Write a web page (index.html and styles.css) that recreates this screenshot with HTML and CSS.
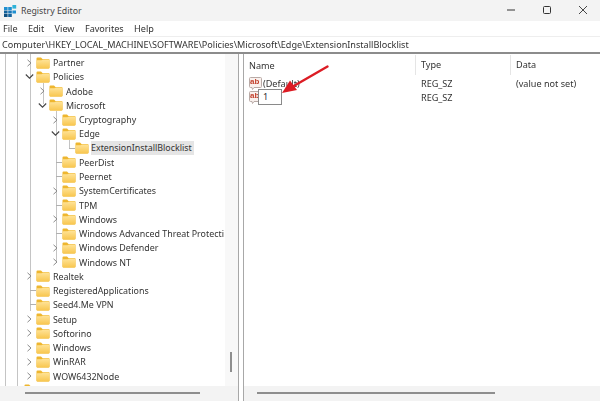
FILE: index.html
```html
<!DOCTYPE html>
<html lang="en">
<head>
<meta charset="utf-8">
<title>Registry Editor</title>
<link rel="stylesheet" href="styles.css">
</head>
<body>
<svg class="defs" width="0" height="0" aria-hidden="true">
  <defs>
    <linearGradient id="fold" x1="0" y1="0" x2="0" y2="1"><stop offset="0" stop-color="#ffe49a"/><stop offset="1" stop-color="#f8c64e"/></linearGradient>
    <symbol id="folder" viewBox="0 0 14 12">
      <path d="M0.5 1.5Q0.5 0.5 1.5 0.5H5L6.5 2H12.5Q13.5 2 13.5 3V10.5Q13.5 11.5 12.5 11.5H1.5Q0.5 11.5 0.5 10.5Z" fill="#eeb62f"/>
      <path d="M0.5 4Q0.5 3.2 1.5 3.2H5.5L7 2.4H12.5Q13.5 2.4 13.5 3.4V10.5Q13.5 11.5 12.5 11.5H1.5Q0.5 11.5 0.5 10.5Z" fill="url(#fold)"/>
    </symbol>
    <symbol id="closed" viewBox="0 0 7 8"><path d="M1.5 0.8L5 4L1.5 7.2" fill="none" stroke="#8a8a8a" stroke-width="1"/></symbol>
    <symbol id="open" viewBox="0 0 9 7"><path d="M0.8 1.5L4.5 5.2L8.2 1.5" fill="none" stroke="#444" stroke-width="1.1"/></symbol>
    <symbol id="ab" viewBox="0 0 13 13">
      <path d="M1.5 0.5H11.5Q12.5 0.5 12.5 1.5V9.5Q12.5 10.5 11.5 10.5H5L3.5 12.5L3 10.5H1.5Q0.5 10.5 0.5 9.5V1.5Q0.5 0.5 1.5 0.5Z" fill="#f9f1ee" stroke="#b9aaa6"/>
    </symbol>
  </defs>
</svg>

<header class="titlebar">
  <svg class="appicon" viewBox="0 0 13 12" width="13" height="12">
    <rect x="0" y="2" width="3.6" height="3" fill="#1f8fd0"/><rect x="4.2" y="2" width="3.6" height="3" fill="#1f8fd0"/><rect x="8.4" y="0" width="3.8" height="3.6" fill="#2fb3d8"/>
    <rect x="0" y="5.5" width="3.6" height="3" fill="#14639c"/><rect x="4.2" y="5.5" width="3.6" height="3" fill="#1976b8"/><rect x="8.4" y="5.5" width="3.6" height="3" fill="#1f8fd0"/>
    <rect x="0" y="9" width="3.6" height="3" fill="#0f4f80"/><rect x="4.2" y="9" width="3.6" height="3" fill="#14639c"/>
  </svg>
  <span class="apptitle">Registry Editor</span>
  <div class="winbtns">
    <svg viewBox="0 0 10 10" width="10" height="10"><path d="M1 5H9" stroke="#333" stroke-width="1"/></svg>
    <svg viewBox="0 0 10 10" width="10" height="10"><rect x="1.5" y="1.5" width="7" height="7" rx="1" fill="none" stroke="#333" stroke-width="1"/></svg>
    <svg viewBox="0 0 10 10" width="10" height="10"><path d="M1 1L9 9M9 1L1 9" stroke="#333" stroke-width="0.9"/></svg>
  </div>
</header>

<nav class="menubar"><span>File</span><span>Edit</span><span>View</span><span>Favorites</span><span>Help</span></nav>
<div class="address">Computer\HKEY_LOCAL_MACHINE\SOFTWARE\Policies\Microsoft\Edge\ExtensionInstallBlocklist</div>

<main class="panes">
  <section class="treepane">
    <div class="treeview">
      <div class="tree">
        <div class="row l1"><svg class="tw"><use href="#closed"/></svg><svg class="fd"><use href="#folder"/></svg><span>Partner</span></div>
        <div class="row l1"><svg class="to"><use href="#open"/></svg><svg class="fd"><use href="#folder"/></svg><span>Policies</span></div>
        <div class="row l2"><svg class="tw"><use href="#closed"/></svg><svg class="fd"><use href="#folder"/></svg><span>Adobe</span></div>
        <div class="row l2"><svg class="to"><use href="#open"/></svg><svg class="fd"><use href="#folder"/></svg><span>Microsoft</span></div>
        <div class="row l3"><svg class="tw"><use href="#closed"/></svg><svg class="fd"><use href="#folder"/></svg><span>Cryptography</span></div>
        <div class="row l3"><svg class="to"><use href="#open"/></svg><svg class="fd"><use href="#folder"/></svg><span>Edge</span></div>
        <div class="row l4"><i class="tn"></i><svg class="fd"><use href="#folder"/></svg><span class="sel">ExtensionInstallBlocklist</span></div>
        <div class="row l3"><i class="tn"></i><svg class="fd"><use href="#folder"/></svg><span>PeerDist</span></div>
        <div class="row l3"><i class="tn"></i><svg class="fd"><use href="#folder"/></svg><span>Peernet</span></div>
        <div class="row l3"><svg class="tw"><use href="#closed"/></svg><svg class="fd"><use href="#folder"/></svg><span>SystemCertificates</span></div>
        <div class="row l3"><i class="tn"></i><svg class="fd"><use href="#folder"/></svg><span>TPM</span></div>
        <div class="row l3"><svg class="tw"><use href="#closed"/></svg><svg class="fd"><use href="#folder"/></svg><span>Windows</span></div>
        <div class="row l3"><i class="tn"></i><svg class="fd"><use href="#folder"/></svg><span>Windows Advanced Threat Protecti</span></div>
        <div class="row l3"><svg class="tw"><use href="#closed"/></svg><svg class="fd"><use href="#folder"/></svg><span>Windows Defender</span></div>
        <div class="row l3"><svg class="tw"><use href="#closed"/></svg><svg class="fd"><use href="#folder"/></svg><span>Windows NT</span></div>
        <div class="row l1"><svg class="tw"><use href="#closed"/></svg><svg class="fd"><use href="#folder"/></svg><span>Realtek</span></div>
        <div class="row l1"><i class="tn"></i><svg class="fd"><use href="#folder"/></svg><span>RegisteredApplications</span></div>
        <div class="row l1"><i class="tn"></i><svg class="fd"><use href="#folder"/></svg><span>Seed4.Me VPN</span></div>
        <div class="row l1"><svg class="tw"><use href="#closed"/></svg><svg class="fd"><use href="#folder"/></svg><span>Setup</span></div>
        <div class="row l1"><svg class="tw"><use href="#closed"/></svg><svg class="fd"><use href="#folder"/></svg><span>Softorino</span></div>
        <div class="row l1"><svg class="tw"><use href="#closed"/></svg><svg class="fd"><use href="#folder"/></svg><span>Windows</span></div>
        <div class="row l1"><svg class="tw"><use href="#closed"/></svg><svg class="fd"><use href="#folder"/></svg><span>WinRAR</span></div>
        <div class="row l1"><svg class="tw"><use href="#closed"/></svg><svg class="fd"><use href="#folder"/></svg><span>WOW6432Node</span></div>
        <div class="row l0"><svg class="fd"><use href="#folder"/></svg></div>
      </div>
      <i class="guide g1"></i><i class="guide g2"></i><i class="guide g3"></i><i class="guide g4"></i><i class="guide g5"></i><i class="guide g6"></i>
      <div class="vscroll"><i></i></div>
    </div>
    <div class="hscroll tree-h"><i></i></div>
  </section>
  <div class="splitter"></div>
  <section class="listpane">
    <div class="list">
      <div class="cols"><span class="c1">Name</span><span class="c2">Type</span><span class="c3">Data</span></div>
      <div class="lrow"><span class="c1 nm"><span class="abicon"><svg><use href="#ab"/></svg><b>ab</b></span>(Default)</span><span class="c2">REG_SZ</span><span class="c3">(value not set)</span></div>
      <div class="lrow"><span class="c1 nm"><span class="abicon"><svg><use href="#ab"/></svg><b>ab</b></span><span class="edit">1</span></span><span class="c2">REG_SZ</span><span class="c3"></span></div>
    </div>
    <div class="hscroll list-h"><i></i></div>
  </section>
</main>

<svg class="arrow" viewBox="0 0 60 40" width="60" height="40">
  <path d="M47.5 6.5L12 27" stroke="#dc1c24" stroke-width="2.4" stroke-linecap="round"/>
  <path d="M2 33L10 20.5L17 30Z" fill="#dc1c24"/>
</svg>
</body>
</html>
```

FILE: styles.css
```css
* { box-sizing: border-box; }
html, body { margin: 0; padding: 0; }
body {
  width: 600px; height: 401px; overflow: hidden; position: relative;
  background: #fff; color: #222;
  font-family: "Noto Sans", "Open Sans", sans-serif; font-size: 9.1px;
  display: flex; flex-direction: column;
  filter: blur(0.3px);
}
.defs { position: absolute; }
.titlebar { height: 21px; flex: none; background: #f3f3f3; display: flex; align-items: center; padding-left: 4px; }
.appicon { flex: none; margin-right: 4px; }
.apptitle { color: #444; font-size: 8.8px; }
.winbtns { margin-left: auto; display: flex; gap: 26px; padding-right: 12px; padding-bottom: 2px; }
.menubar { height: 15px; flex: none; display: flex; gap: 10.4px; align-items: center; padding-left: 3px; background: #fff; color: #333; }
.address { height: 18px; flex: none; background: #fff; border-top: 1px solid #eee; border-bottom: 2px solid #8c8c8c; padding-left: 2px; line-height: 16px; color: #333; white-space: nowrap; }
.panes { flex: 1; min-height: 0; display: flex; }
.treepane { width: 238px; flex: none; display: flex; flex-direction: column; }
.treeview { flex: 1; min-height: 0; display: flex; position: relative; }
.tree { flex: 1; min-width: 0; overflow: hidden; padding-top: 1.4px; }
.row { height: 14.25px; flex: none; display: flex; align-items: center; white-space: nowrap; position: relative; z-index: 1; font-size: 8.9px; }
.row.l0 { padding-left: 24px; }
.row.l1 { padding-left: 26px; }
.row.l2 { padding-left: 39px; }
.row.l3 { padding-left: 52px; }
.row.l4 { padding-left: 69px; }
.tw { width: 7px; height: 8px; flex: none; margin-right: 3px; }
.to { width: 9px; height: 7px; flex: none; margin-left: -1px; margin-right: 2px; }
.tn { width: 6px; height: 1px; flex: none; background: #b0b0b0; margin-left: 4px; }
.l4 .tn { margin-left: 0; }
.fd { width: 14px; height: 12px; flex: none; margin-right: 2px; }
.row span { color: #333; padding: 0 1px; }
.row span.sel { background: #e5e5e5; padding: 0 2px 0 0; line-height: 14px; }
.guide { position: absolute; width: 1px; background: #c4c4c4; }
.g1 { left: 5px; top: 0; bottom: 0; }
.g2 { left: 17px; top: 0; bottom: 0; }
.g3 { left: 30px; top: 0; height: 257px; }
.g4 { left: 43px; top: 29px; height: 21px; }
.g5 { left: 56px; top: 57px; height: 150px; }
.g6 { left: 69px; top: 86px; height: 8px; }
.vscroll { width: 13px; flex: none; background: #f8f8f8; position: relative; }
.vscroll i { position: absolute; left: 5px; top: 298px; width: 2px; height: 20px; background: #8e8e8e; }
.hscroll { height: 15px; flex: none; background: #f3f3f3; position: relative; }
.hscroll i { position: absolute; top: 6px; height: 2px; background: #8e8e8e; display: block; }
.tree-h i { left: 25px; width: 175px; }
.list-h i { left: 13px; width: 238px; }
.splitter { width: 6px; flex: none; background: #fff; border-left: 1px solid #a8a8a8; border-right: 1px solid #a8a8a8; }
.listpane { flex: 1; min-width: 0; display: flex; flex-direction: column; }
.list { flex: 1; min-height: 0; }
.cols { height: 22px; display: flex; align-items: center; color: #333; }
.lrow { height: 14.5px; display: flex; align-items: center; color: #333; }
.c1 { width: 171px; padding-left: 5px; flex: none; }
.c2 { width: 95px; padding-left: 5px; flex: none; }
.cols .c2, .cols .c3 { border-left: 1px solid #e5e5e5; line-height: 20px; padding-left: 5px; }
.lrow .c2 { padding-left: 6px; }
.lrow .c3 { padding-left: 6px; }
.nm { display: flex; align-items: center; }
.abicon { width: 13px; height: 13px; position: relative; flex: none; margin-right: 1px; }
.abicon svg { width: 13px; height: 13px; display: block; }
.abicon b { position: absolute; left: 1px; top: -1px; font: bold 8px/11px "Liberation Sans", sans-serif; color: #c2402c; }
.edit { width: 24px; height: 16px; border: 1px solid #8a8a8a; background: #fff; line-height: 14px; padding-left: 4px; position: relative; z-index: 1; margin-left: -5px; margin-top: -1px; }
.arrow { position: absolute; left: 280px; top: 60px; }
```
